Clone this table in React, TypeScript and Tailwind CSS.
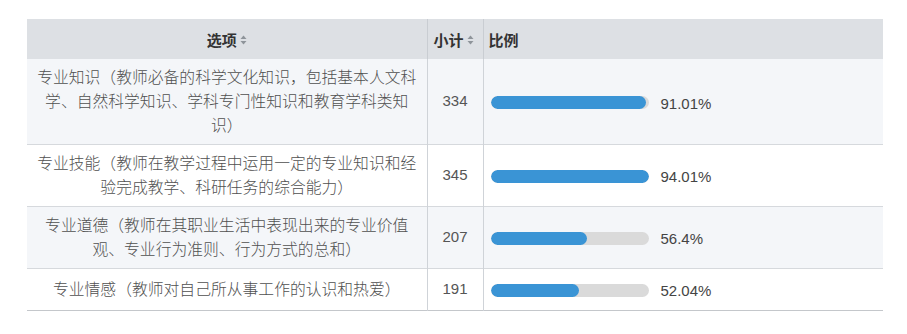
import React from 'react';

const rows = [
  {
    label: '专业知识（教师必备的科学文化知识，包括基本人文科学、自然科学知识、学科专门性知识和教育学科类知识）',
    count: 334,
    pct: '91.01%',
    fill: 155,
    h: 'h-[85px]',
    bg: 'bg-[#f4f6f9]',
  },
  {
    label: '专业技能（教师在教学过程中运用一定的专业知识和经验完成教学、科研任务的综合能力）',
    count: 345,
    pct: '94.01%',
    fill: 158,
    h: 'h-[62px]',
    bg: 'bg-white',
  },
  {
    label: '专业道德（教师在其职业生活中表现出来的专业价值观、专业行为准则、行为方式的总和）',
    count: 207,
    pct: '56.4%',
    fill: 96,
    h: 'h-[62px]',
    bg: 'bg-[#f4f6f9]',
  },
  {
    label: '专业情感（教师对自己所从事工作的认识和热爱）',
    count: 191,
    pct: '52.04%',
    fill: 88,
    h: 'h-[42px]',
    bg: 'bg-white',
  },
];

function SortIcon() {
  return (
    <svg width="7" height="10" viewBox="0 0 7 10" className="inline-block ml-[3px] align-middle">
      <path d="M3.5 0.5 L6.5 4 L0.5 4 Z" fill="#8e949a" />
      <path d="M3.5 9.5 L6.5 6 L0.5 6 Z" fill="#8e949a" />
    </svg>
  );
}

export default function App() {
  return (
    <div className="w-[907px] h-[334px] bg-white pt-[19px] pl-[27px] font-['Noto_Sans_CJK_SC',sans-serif]">
      <table className="w-[856px] table-fixed border-collapse">
        <colgroup>
          <col className="w-[400px]" />
          <col className="w-[56px]" />
          <col className="w-[400px]" />
        </colgroup>
        <thead>
          <tr className="h-[40px] bg-[#dde0e4] text-[15px] font-bold text-[#333]">
            <th className="text-center border-r border-[#c9cdd2] px-2">
              <span className="align-middle">选项</span>
              <SortIcon />
            </th>
            <th className="text-left border-r border-[#c9cdd2] pl-[6px] whitespace-nowrap">
              <span className="align-middle">小计</span>
              <SortIcon />
            </th>
            <th className="text-left pl-[5px]">
              <span className="align-middle">比例</span>
            </th>
          </tr>
        </thead>
        <tbody>
          {rows.map((r, i) => (
            <tr
              key={i}
              className={`${r.h} ${r.bg} border-b ${i === rows.length - 1 ? 'border-[#c4c7cb]' : 'border-[#d6d9dd]'}`}
            >
              <td className="text-center align-middle px-2 text-[15.8px] leading-[24px] font-light text-[#505050] border-r border-[#cfd3d8]">
                {r.label}
              </td>
              <td className="text-center align-middle text-[15px] text-[#555] font-['Liberation_Sans',sans-serif] border-r border-[#cfd3d8]">
                {r.count}
              </td>
              <td className="align-middle pl-[7px]">
                <div className="flex items-center gap-[12px] mt-[3px]">
                  <div className="w-[158px] h-[13px] rounded-full bg-[#dadada] overflow-hidden">
                    <div className="h-full rounded-full bg-[#3a94d5]" style={{ width: r.fill }} />
                  </div>
                  <span className="text-[15px] text-[#444] font-['Liberation_Sans',sans-serif] mt-[2px]">{r.pct}</span>
                </div>
              </td>
            </tr>
          ))}
        </tbody>
      </table>
    </div>
  );
}
